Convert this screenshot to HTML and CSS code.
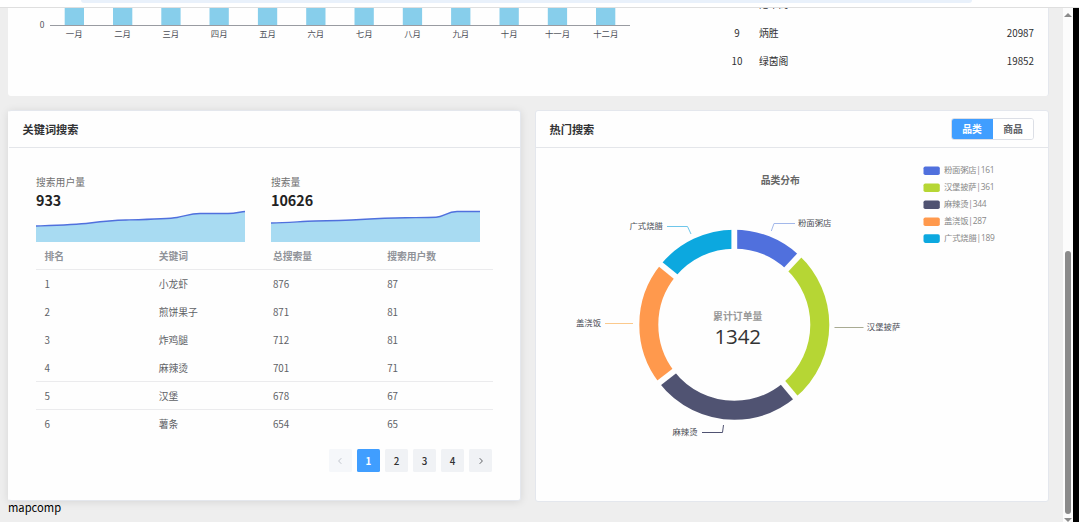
FILE: index.html
```html
<!DOCTYPE html>
<html lang="zh-CN">
<head>
  <meta charset="UTF-8">
  <title>数据大盘</title>
  <link rel="stylesheet" href="styles.css">
</head>
<body>
  <div class="toolbar"><div class="address"></div></div>
  <div class="window">
    <main class="page">
      <section class="card sales">
        <svg class="bar-chart" width="640" height="88" viewBox="8 8 640 88">
          <g fill="#87ceeb">
            <rect x="64.7" y="8" width="19.3" height="17"/>
            <rect x="113" y="8" width="19.3" height="17"/>
            <rect x="161.3" y="8" width="19.3" height="17"/>
            <rect x="209.5" y="8" width="19.3" height="17"/>
            <rect x="257.9" y="8" width="19.3" height="17"/>
            <rect x="306.2" y="8" width="19.3" height="17"/>
            <rect x="354.5" y="8" width="19.3" height="17"/>
            <rect x="402.8" y="8" width="19.3" height="17"/>
            <rect x="451.1" y="8" width="19.3" height="17"/>
            <rect x="499.5" y="8" width="19.3" height="17"/>
            <rect x="547.8" y="8" width="19.3" height="17"/>
            <rect x="596" y="8" width="19.3" height="17"/>
          </g>
          <path d="M50 25.5H630" stroke="#999ba1"/>
          <text x="42" y="28" text-anchor="middle">0</text>
          <g text-anchor="middle">
            <text x="74.2" y="37.4">一月</text>
            <text x="122.5" y="37.4">二月</text>
            <text x="170.8" y="37.4">三月</text>
            <text x="219.2" y="37.4">四月</text>
            <text x="267.5" y="37.4">五月</text>
            <text x="315.8" y="37.4">六月</text>
            <text x="364.2" y="37.4">七月</text>
            <text x="412.5" y="37.4">八月</text>
            <text x="460.8" y="37.4">九月</text>
            <text x="509.2" y="37.4">十月</text>
            <text x="557.5" y="37.4">十一月</text>
            <text x="605.8" y="37.4">十二月</text>
          </g>
        </svg>
        <ul class="ranking">
          <li><span class="no"></span><span class="shop">港丰阁</span></li>
          <li><span class="no">9</span><span class="shop">炳胜</span><span>20987</span></li>
          <li><span class="no">10</span><span class="shop">绿茵阁</span><span>19852</span></li>
        </ul>
      </section>

      <div class="row">
        <section class="card keyword">
          <header class="card-header"><h2>关键词搜索</h2></header>
          <div class="card-body">
            <div class="stats">
              <div class="stat">
                <p class="label">搜索用户量</p>
                <p class="value">933</p>
                <svg width="209" height="32" viewBox="36 210 209 32">
                  <path fill="#a8dbf2" d="M36 226C52 225.5 74 225 90 223S115 220.3 126 220S168 219 177 217.5S190 213.5 200 213.5H228C235 213.5 240 212 245 211.5V242H36Z"/>
                  <path class="line" d="M36 226C52 225.5 74 225 90 223S115 220.3 126 220S168 219 177 217.5S190 213.5 200 213.5H228C235 213.5 240 212 245 211.5"/>
                </svg>
              </div>
              <div class="stat">
                <p class="label">搜索量</p>
                <p class="value">10626</p>
                <svg width="209" height="32" viewBox="271 210 209 32">
                  <path fill="#a8dbf2" d="M271 223C288 223 302 221.2 315 221S350 220 365 219.2S395 218 406 217.8S428 217.5 436 217.2S447 211.5 457 211.5H480V242H271Z"/>
                  <path class="line" d="M271 223C288 223 302 221.2 315 221S350 220 365 219.2S395 218 406 217.8S428 217.5 436 217.2S447 211.5 457 211.5H480"/>
                </svg>
              </div>
            </div>
            <table class="table">
              <thead>
                <tr><th>排名</th><th>关键词</th><th>总搜索量</th><th>搜索用户数</th></tr>
              </thead>
              <tbody>
                <tr><td>1</td><td>小龙虾</td><td>876</td><td>87</td></tr>
                <tr><td>2</td><td>煎饼果子</td><td>871</td><td>81</td></tr>
                <tr><td>3</td><td>炸鸡腿</td><td>712</td><td>81</td></tr>
                <tr class="lined"><td>4</td><td>麻辣烫</td><td>701</td><td>71</td></tr>
                <tr class="lined"><td>5</td><td>汉堡</td><td>678</td><td>67</td></tr>
                <tr><td>6</td><td>薯条</td><td>654</td><td>65</td></tr>
              </tbody>
            </table>
            <div class="pager">
              <button class="disabled"><svg width="6" height="8" viewBox="0 0 6 8"><path d="M4.3 1.2L1.6 4L4.3 6.8"/></svg></button>
              <button class="active">1</button>
              <button>2</button>
              <button>3</button>
              <button>4</button>
              <button><svg width="6" height="8" viewBox="0 0 6 8"><path d="M1.7 1.2L4.4 4L1.7 6.8"/></svg></button>
            </div>
          </div>
        </section>

        <section class="card hot">
          <header class="card-header">
            <h2>热门搜索</h2>
            <div class="switch"><button class="on">品类</button><button>商品</button></div>
          </header>
          <svg class="donut" width="511" height="352" viewBox="536 148 511 352">
            <text class="chart-title" x="780.3" y="183.7" text-anchor="middle">品类分布</text>

            <g fill="none" stroke-width="19" transform="rotate(-90 734.3 324.7)">
              <circle cx="734.3" cy="324.7" r="85.5" pathLength="1342" stroke="#5070dd" stroke-dasharray="161 1181"/>
              <circle cx="734.3" cy="324.7" r="85.5" pathLength="1342" stroke="#b6d634" stroke-dasharray="361 981" stroke-dashoffset="-161"/>
              <circle cx="734.3" cy="324.7" r="85.5" pathLength="1342" stroke="#505372" stroke-dasharray="344 998" stroke-dashoffset="-522"/>
              <circle cx="734.3" cy="324.7" r="85.5" pathLength="1342" stroke="#ff994d" stroke-dasharray="287 1055" stroke-dashoffset="-866"/>
              <circle cx="734.3" cy="324.7" r="85.5" pathLength="1342" stroke="#0ca8df" stroke-dasharray="189 1153" stroke-dashoffset="-1153"/>
            </g>
            <!-- gaps between the slices -->
            <g stroke="#fefefe" stroke-width="5.8" transform="translate(734.3 324.7)">
              <path d="M0 -70V-98"/>
              <path d="M0 -70V-98" transform="rotate(43.2)"/>
              <path d="M0 -70V-98" transform="rotate(140)"/>
              <path d="M0 -70V-98" transform="rotate(232.3)"/>
              <path d="M0 -70V-98" transform="rotate(309.3)"/>
            </g>

            <g fill="none" stroke-width="1">
              <path d="M771.3 231L774 223.5H795" stroke="#a3b8ea"/>
              <path d="M834.5 327.5H863.5" stroke="#a9ab93"/>
              <path d="M702 432.5H722.5L723.5 425" stroke="#505372"/>
              <path d="M605 323.5H633" stroke="#fbc98c"/>
              <path d="M667 226.5H687.5L691 234" stroke="#6ec6ea"/>
            </g>
            <text x="798" y="226.4">粉面粥店</text>
            <text x="866.8" y="330.4">汉堡披萨</text>
            <text x="672.5" y="435">麻辣烫</text>
            <text x="576" y="325.6">盖浇饭</text>
            <text x="629.5" y="229.2">广式烧腊</text>

            <text class="total-label" x="737.8" y="319.6" text-anchor="middle">累计订单量</text>
            <text class="total" x="714.5" y="344.3" textLength="46.5">1342</text>

            <g class="legend">
              <rect x="923.5" y="166.5" width="16.3" height="8.6" rx="1.8" fill="#5070dd"/>
              <rect x="923.5" y="183.4" width="16.3" height="8.6" rx="1.8" fill="#b6d634"/>
              <rect x="923.5" y="200.4" width="16.3" height="8.6" rx="1.8" fill="#505372"/>
              <rect x="923.5" y="217.4" width="16.3" height="8.6" rx="1.8" fill="#ff994d"/>
              <rect x="923.5" y="234.3" width="16.3" height="8.6" rx="1.8" fill="#0ca8df"/>
              <text x="944" y="173.4" textLength="50.5">粉面粥店|161</text>
              <text x="944" y="190.4" textLength="50.5">汉堡披萨|361</text>
              <text x="944" y="207.4" textLength="42.5">麻辣烫|344</text>
              <text x="944" y="224.3" textLength="42.5">盖浇饭|287</text>
              <text x="944" y="241.3" textLength="50.8">广式烧腊|189</text>
            </g>
          </svg>
        </section>
      </div>
      <div class="map">mapcomp</div>
    </main>
    <div class="scrollbar">
      <svg width="10" height="6" viewBox="0 0 10 6"><path d="M5 1L9 5H1Z"/></svg>
      <div class="thumb"></div>
      <svg width="10" height="6" viewBox="0 0 10 6"><path d="M1 2H9L5 6Z"/></svg>
    </div>
    <div class="edge"></div>
  </div>
</body>
</html>
```

FILE: styles.css
```css
* {
  box-sizing: border-box;
}
body {
  margin: 0;
  height: 522px;
  overflow: hidden;
  font-family: "Noto Sans CJK SC", sans-serif;
  font-size: 9.8px;
  color: #303133;
  background: #fff;
}
h2, p, ul {
  margin: 0;
  padding: 0;
}
svg {
  display: block;
}
button {
  font-family: inherit;
  font-size: 9.8px;
  padding: 0;
  border: none;
}

.toolbar {
  height: 8px;
  padding: 0 107px 0 81px;
  border-bottom: 1px solid #dfdfdf;
}
.address {
  height: 3px;
  background: #e9f1fb;
  border-radius: 0 0 6px 6px;
}
.window {
  display: flex;
  height: 514px;
}
.page {
  flex: 1;
  padding: 0 14px 0 8px;
  background: #eee;
  overflow: hidden;
}
.card {
  background: #fefefe;
  border: 1px solid #e4e7ed;
  border-radius: 3px;
}

/* sales */
.sales {
  display: flex;
  justify-content: space-between;
  height: 88px;
  border-width: 0 1px 0 0;
  border-radius: 0 0 3px 3px;
  overflow: hidden;
}
.bar-chart text,
.donut text {
  font-family: "Noto Sans CJK SC", sans-serif;
  font-size: 8.4px;
  fill: #4c4e57;
}
.ranking {
  width: 323px;
  margin-top: -17px;
  padding-right: 14px;
  list-style: none;
}
.ranking li {
  display: flex;
  align-items: center;
  height: 28px;
}
.ranking li:first-child {
  padding-bottom: 2px;
}
.ranking .no {
  width: 24px;
  text-align: center;
}
.ranking .shop {
  flex: 1;
  padding-left: 10px;
}

.row {
  display: flex;
  align-items: flex-start;
  gap: 14px;
  margin-top: 14px;
}
.card-header {
  display: flex;
  align-items: center;
  justify-content: space-between;
  height: 37px;
  padding: 0 14px 0 13.5px;
  border-bottom: 1px solid #e4e6ea;
}
.card-header h2 {
  font-size: 11.2px;
  font-weight: 700;
  line-height: 16px;
}

/* keyword search */
.keyword {
  width: 513px;
  height: 391px;
  border-color: #e4e7ed #e4e7ed #e4e7ed #fefefe;
  box-shadow: 0 1px 9px rgba(0, 0, 0, .1);
}
.card-body {
  padding: 26px 28px 0 27px;
}
.stats {
  display: flex;
  gap: 26px;
}
.stat {
  width: 209px;
}
.label {
  height: 16px;
  line-height: 16px;
  color: #707070;
}
.value {
  height: 20px;
  font-size: 14.3px;
  font-weight: 700;
  line-height: 20px;
  color: #222;
}
.table {
  width: 457px;
  margin-right: -1px;
  table-layout: fixed;
  border-collapse: separate;
  border-spacing: 0;
  color: #606266;
}
.table th,
.table td {
  height: 27.95px;
  padding: 1.6px 8.4px 0;
  line-height: 14px;
  text-align: left;
  border-bottom: 1px solid transparent;
}
.table th {
  font-weight: 700;
  color: #909399;
}
.table th,
.table .lined td {
  border-bottom-color: #ebebed;
}
.pager {
  display: flex;
  justify-content: flex-end;
  gap: 5.5px;
  margin-top: 11px;
}
.pager button {
  display: flex;
  align-items: center;
  justify-content: center;
  width: 22.6px;
  height: 23px;
  border-radius: 1.5px;
  background: #f0f2f5;
  color: #303133;
  font-weight: 500;
  line-height: 14px;
  padding-top: 1px;
}
.pager path {
  fill: none;
  stroke: #606266;
}
.pager .active {
  background: #409eff;
  color: #fff;
  font-weight: 700;
}
.pager .disabled {
  background: #f5f7fa;
}
.pager .disabled path {
  stroke: #c0c4cc;
}
.line {
  fill: none;
  stroke: #5070dd;
  stroke-width: 1.4;
}

/* hot search */
.hot {
  flex: 1;
  height: 392px;
}
.switch {
  display: flex;
  width: 83px;
  height: 22px;
  border: 1px solid #dcdfe6;
  border-radius: 3px;
  overflow: hidden;
}
.switch button {
  flex: 1;
  background: #fff;
  color: #606266;
  font-weight: 700;
}
.switch .on {
  flex: 0 0 42px;
  margin: -1px 0 -1px -1px;
  background: #409eff;
  color: #fff;
}
.donut .chart-title {
  font-size: 9.8px;
  font-weight: 700;
  fill: #666;
}
.donut .total-label {
  font-size: 9.9px;
  font-weight: 700;
  fill: #999;
}
.donut .total {
  font-family: "Open Sans", sans-serif;
  font-size: 20.5px;
  fill: #333;
}
.donut .legend text {
  font-family: "Open Sans", "Noto Sans CJK SC", sans-serif;
  font-size: 8.4px;
  fill: #888;
}

.map {
  font-size: 11.2px;
  line-height: 14px;
  margin-top: -2px;
  color: #000;
}

.scrollbar {
  display: flex;
  flex-direction: column;
  justify-content: space-between;
  align-items: center;
  width: 10px;
  padding-top: 4px;
  background: #fcfcfc;
}
.scrollbar path {
  fill: #8b8b8b;
}
.thumb {
  width: 6px;
  height: 263px;
  margin-top: auto;
  margin-bottom: 2px;
  border-radius: 3px;
  background: #8b8b8b;
}
.edge {
  width: 6px;
  background: #000;
}
```
